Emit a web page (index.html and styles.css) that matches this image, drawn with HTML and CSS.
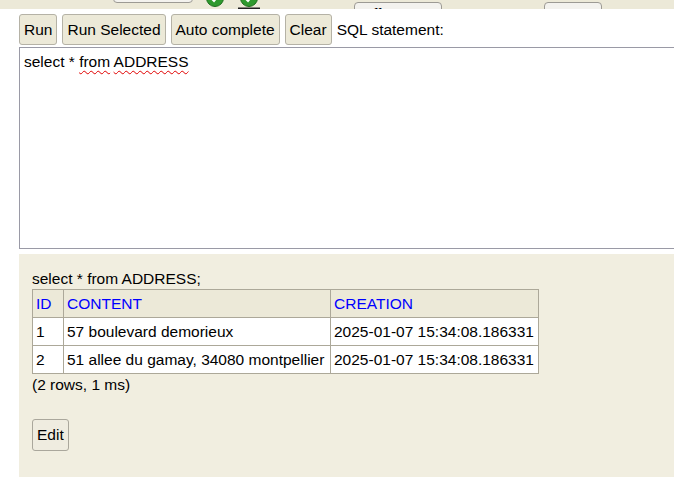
FILE: index.html
```html
<!DOCTYPE html>
<html>
<head>
<meta charset="utf-8">
<link rel="stylesheet" href="styles.css">
</head>
<body>
<div class="topbar">
  <span class="tb-btn tb-a"></span>
  <svg class="ico ico1" width="20" height="18" viewBox="0 0 20 18"><circle cx="10" cy="9" r="8.5" fill="#2f9a2f" stroke="#1d6e1d"/><path d="M6 9l3 3 5-6" fill="none" stroke="#fff" stroke-width="2"/></svg>
  <svg class="ico ico2" width="22" height="20" viewBox="0 0 22 20"><circle cx="11" cy="9" r="8.5" fill="#2f9a2f" stroke="#1d6e1d"/><path d="M7 9l3 3 5-6" fill="none" stroke="#fff" stroke-width="2"/><rect x="0" y="18.5" width="22" height="1.5" fill="#222"/></svg>
  <span class="tb-btn tb-b">Off</span>
  <span class="tb-btn tb-c">Ca</span>
</div>
<div class="query">
  <div class="toolbar">
    <button class="btn">Run</button>
    <button class="btn">Run Selected</button>
    <button class="btn">Auto complete</button>
    <button class="btn">Clear</button>
    <span class="label">SQL statement:</span>
  </div>
  <div class="editor">select * <span class="sp">from</span> <span class="sp">ADDRESS</span></div>
  <div class="result">
    <div class="stmt">select * from ADDRESS;</div>
    <table class="grid">
      <thead>
        <tr><th class="c-id">ID</th><th class="c-content">CONTENT</th><th class="c-creation">CREATION</th></tr>
      </thead>
      <tbody>
        <tr><td>1</td><td>57 boulevard demorieux</td><td>2025-01-07 15:34:08.186331</td></tr>
        <tr><td>2</td><td>51 allee du gamay, 34080 montpellier</td><td>2025-01-07 15:34:08.186331</td></tr>
      </tbody>
    </table>
    <div class="meta">(2 rows, 1 ms)</div>
    <button class="btn edit">Edit</button>
  </div>
</div>
</body>
</html>
```
FILE: styles.css
```css
html, body {
  margin: 0;
  padding: 0;
  background: #ffffff;
  font-family: "Liberation Sans", Arial, sans-serif;
  font-size: 15.5px;
  color: #000;
  overflow: hidden;
}

.topbar {
  height: 9px;
  background: #ece9d8;
  display: flex;
  align-items: flex-start;
  overflow: hidden;
}

.tb-btn {
  display: block;
  box-sizing: border-box;
  border: 1px solid #9c9a94;
  border-radius: 4px;
  background: #f3f2ee;
  font-size: 15.5px;
  line-height: 18px;
  padding: 2px 0 0 6px;
  color: #000;
  overflow: hidden;
  white-space: nowrap;
}

.tb-a {
  margin-left: 113px;
  width: 80px;
  height: 22px;
  margin-top: -19px;
}

.ico { display: block; flex: none; margin-top: -11px; }
.ico1 { margin-left: 12px; }
.ico2 { margin-left: 13px; }

.tb-b {
  margin-left: 94px;
  width: 88px;
  height: 24px;
  margin-top: 2px;
}

.tb-c {
  margin-left: 102px;
  width: 58px;
  height: 24px;
  margin-top: 2px;
  padding-left: 8px;
}

.query {
  padding-left: 19px;
}

.toolbar {
  display: flex;
  align-items: center;
  gap: 5px;
  margin-top: 5px;
  height: 31px;
}

.btn {
  font-family: "Liberation Sans", Arial, sans-serif;
  font-size: 15.5px;
  color: #000;
  background: #ece9d8;
  border: 1px solid #b5b2a6;
  border-radius: 3px;
  height: 31px;
  padding: 0 4px;
  margin: 0;
  line-height: 18px;
}

.label {
  margin-left: 0;
  line-height: 18px;
}

.editor {
  margin-top: 2px;
  border: 1px solid #9a9aa6;
  border-right: none;
  padding: 5px 4px;
  box-sizing: border-box;
  height: 202px;
  line-height: 18px;
  background: #fff;
}

.sp {
  text-decoration: underline wavy #e00000;
  text-decoration-thickness: 1px;
  text-underline-offset: 3px;
}

.result {
  margin-top: 5px;
  background: #f1eee0;
  padding: 16px 13px 0 13px;
  height: 240px;
  box-sizing: border-box;
}

.stmt {
  line-height: 18px;
  margin-bottom: 1px;
}

.grid {
  border-collapse: collapse;
  border: 1px solid #aca899;
}

.grid th, .grid td {
  border: 1px solid #aca899;
  padding: 5px 3px 4px 3px;
  line-height: 18px;
  text-align: left;
  font-weight: normal;
  white-space: nowrap;
}

.grid th {
  background: #ece9d8;
  color: #0000ff;
}

.grid td {
  background: #fff;
}

.c-id { width: 24px; }
.c-content { width: 260px; }
.c-creation { width: 201px; }

.meta {
  line-height: 18px;
  margin-top: 2px;
}

.edit {
  margin-top: 25px;
  height: 32px;
  padding: 0 4px;
  background: #efece0;
  border-color: #aaa79c;
}
```
